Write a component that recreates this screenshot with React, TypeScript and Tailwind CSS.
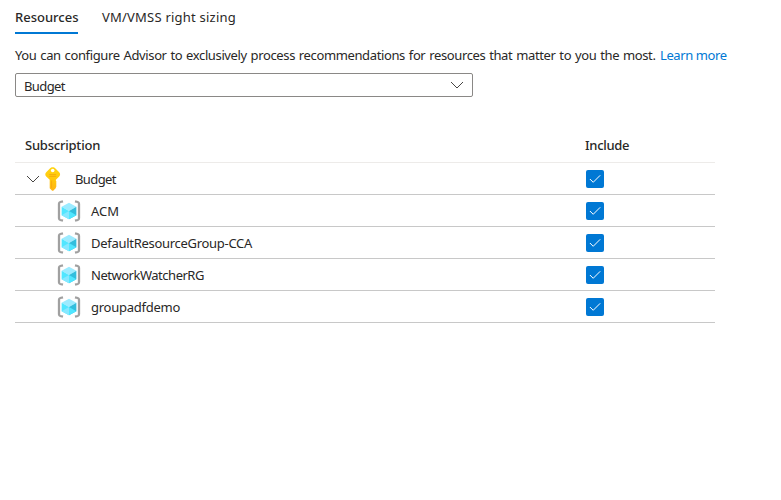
import React from "react";

const FONT = "font-['Noto_Sans','Open_Sans',sans-serif]";

function Chevron() {
  return (
    <svg width="14" height="8" viewBox="0 0 14 8" fill="none" className="shrink-0">
      <path d="M1 1 7 7 13 1" stroke="#484644" strokeWidth="1" />
    </svg>
  );
}

function KeyIcon() {
  return (
    <svg width="17" height="24" viewBox="0 0 17 24" className="shrink-0">
      <defs>
        <linearGradient id="key" x1="0" y1="0" x2="0" y2="1">
          <stop offset="0" stopColor="#ffd412" />
          <stop offset="0.5" stopColor="#ffc90e" />
          <stop offset="1" stopColor="#ffb516" />
        </linearGradient>
      </defs>
      <g transform="translate(0.7 0)">
        <path
          d="M8 0.3C9.2 0.3 10 0.7 10.8 1.5L14.5 5.2C15.7 6.4 15.7 8.2 14.5 9.4L11.2 12.7V14L12 14.9L11.2 15.9L12 16.9L11.2 17.9L12 18.9L11.2 19.9V21L8.8 23.5Q8 24 7.2 23.5L5 21.2V12.7L1.5 9.4C0.3 8.2 0.3 6.4 1.5 5.2L5.2 1.5C6 0.7 6.8 0.3 8 0.3Z"
          fill="url(#key)"
        />
        <circle cx="8" cy="3.5" r="1.8" fill="#fff" />
        <path d="M4.5 7.6h7M4.5 9.4h7" stroke="#f3a40d" strokeWidth="0.8" />
        <path d="M6.9 13.5v7.3" stroke="#f5a50f" strokeWidth="0.8" />
      </g>
    </svg>
  );
}

function GroupIcon() {
  return (
    <svg width="24" height="22" viewBox="0 0 24 22" className="shrink-0">
      <path
        d="M6 1.3 3.3 2Q2 2.4 2 3.7V18.3Q2 19.6 3.3 20L6 20.7M18 1.3 20.7 2Q22 2.4 22 3.7V18.3Q22 19.6 20.7 20L18 20.7"
        fill="none"
        stroke="#a0a0a0"
        strokeWidth="2.3"
      />
      <path d="M12 2.7 19.4 6.8 12 11 4.6 6.8Z" fill="#9cebff" />
      <path d="M4.6 6.8 12 11V19.3L4.6 15.2Z" fill="#50e6ff" />
      <path d="M4.6 15.2 12 11V19.3Z" fill="#86e8ff" />
      <path d="M19.4 6.8V15.2L12 19.3V11Z" fill="#32bedd" />
      <path d="M12 11 19.4 15.2 12 19.3Z" fill="#50e6ff" />
    </svg>
  );
}

function Check() {
  return (
    <span className="flex size-[18px] shrink-0 items-center justify-center rounded-[2px] bg-[#0078d4]">
      <svg width="12" height="10" viewBox="0 0 12 10" fill="none">
        <path d="M0.9 5 4.2 8.3 11.2 1.3" stroke="#fff" strokeWidth="1" />
      </svg>
    </span>
  );
}

const groups = [
  { name: "ACM", tracking: "tracking-normal" },
  { name: "DefaultResourceGroup-CCA", tracking: "tracking-[-0.29px]" },
  { name: "NetworkWatcherRG", tracking: "tracking-[-0.48px]" },
  { name: "groupadfdemo", tracking: "tracking-[-0.25px]" },
];

export default function App() {
  return (
    <main className={`h-[500px] w-[781px] overflow-hidden bg-white pl-[15px] text-[13px] leading-[18px] whitespace-nowrap text-[#292827] ${FONT}`}>
      <nav className="flex h-[34px] gap-6">
        <span className="h-[34px] w-[63px] border-b-2 border-[#0078d4] pt-[8px] font-medium">Resources</span>
        <span className="pt-[8px] tracking-[0.22px]">VM/VMSS right sizing</span>
      </nav>
      <p className="flex h-[39px] pt-[12px]">
        <span className="w-[645px] tracking-[-0.37px] [word-spacing:0.8px]">You can configure Advisor to exclusively process recommendations for resources that matter to you the most.</span>
        <a className="tracking-[-0.4px] text-[#0078d4]">Learn more</a>
      </p>
      <div className="flex h-6 w-[458px] items-center justify-between rounded-[2px] border border-[#8a8886] pr-2 pl-2">
        <span className="pt-[1px] tracking-[-0.6px]">Budget</span>
        <Chevron />
      </div>
      <section className="mt-[31px] w-[700px]">
        <div className="flex h-[35px] border-b border-[#edebe9] pt-[8px] pl-[10px] font-medium">
          <span className="w-[560px] tracking-[-0.22px]">Subscription</span>
          <span className="tracking-[-0.3px]">Include</span>
        </div>
        <div className="flex h-8 items-center border-b border-[#c8c8c8] pl-[11px]">
          <Chevron />
          <span className="ml-1 w-[31px]"><KeyIcon /></span>
          <span className="w-[511px] tracking-[-0.6px]">Budget</span>
          <Check />
        </div>
        {groups.map((g) => (
          <div key={g.name} className="flex h-8 items-center border-b border-[#c8c8c8] pl-[42px]">
            <GroupIcon />
            <span className={`ml-[10px] w-[495px] ${g.tracking}`}>{g.name}</span>
            <Check />
          </div>
        ))}
      </section>
    </main>
  );
}
